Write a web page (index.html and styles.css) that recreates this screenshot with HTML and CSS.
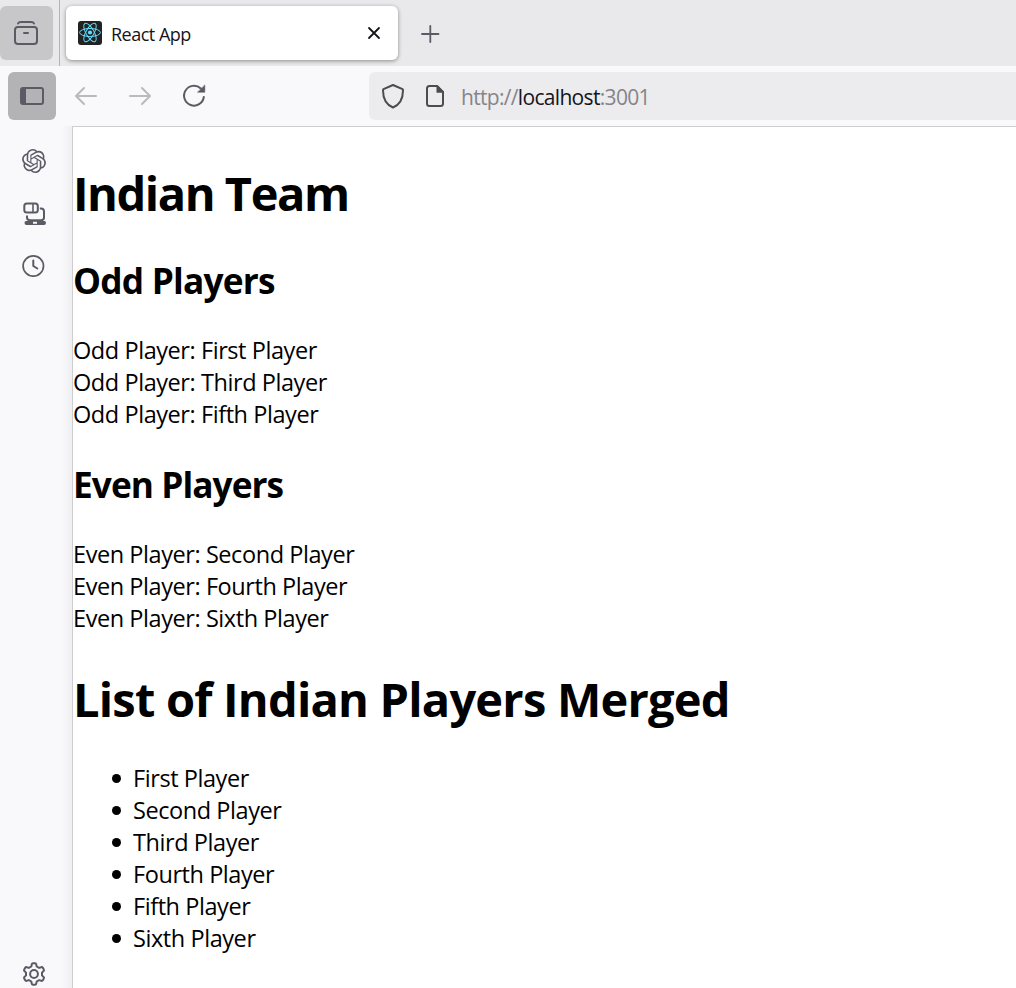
FILE: index.html
```html
<!DOCTYPE html>
<html lang="en">
<head>
<meta charset="utf-8">
<title>React App</title>
<link rel="stylesheet" href="styles.css">
</head>
<body>
<div class="browser">
  <header class="tabbar">
    <div class="firefox-view"><svg width="26" height="26" viewBox="0 0 26 26" fill="none" stroke="#5b5b66" stroke-width="2" stroke-linecap="round"><path d="M5 3.500Q5.500 2 8 2h10q2.500 0 3 1.500"/><rect x="2" y="7" width="22" height="17" rx="3"/><path d="M11 13h4"/></svg></div>
    <div class="divider"></div>
    <div class="tab">
      <svg class="favicon" width="24" height="24" viewBox="0 0 24 24" fill="none" stroke="#61dafb"><rect width="24" height="24" rx="3" fill="#222" stroke="none"/><circle cx="12" cy="11.500" r="2.100" fill="#61dafb" stroke="none"/><ellipse cx="12" cy="11.500" rx="10.400" ry="4" /><ellipse cx="12" cy="11.500" rx="10.400" ry="4" transform="rotate(60 12 11.500)"/><ellipse cx="12" cy="11.500" rx="10.400" ry="4" transform="rotate(120 12 11.500)"/></svg>
      <span class="tab-title">React App</span>
      <svg class="close" width="12" height="12" viewBox="0 0 12 12" fill="none" stroke="#15141a" stroke-width="1.800" stroke-linecap="round"><path d="M1 1l10 10M11 1L1 11"/></svg>
    </div>
    <svg class="new-tab" width="18" height="18" viewBox="0 0 18 18" fill="none" stroke="#5b5b66" stroke-width="1.800" stroke-linecap="round"><path d="M9.300 1v16M1 9h16.500"/></svg>
  </header>
  <nav class="toolbar">
    <div class="side-toggle"><svg width="24" height="18" viewBox="0 0 24 18"><rect x="1" y="1" width="22" height="16" rx="2" fill="none" stroke="#5b5b66" stroke-width="2"/><path d="M1 1h5v16H1z" fill="#5b5b66"/></svg></div>
    <svg class="back" width="22" height="18" viewBox="0 0 22 18" fill="none" stroke="#b9b9be" stroke-width="2" stroke-linecap="round" stroke-linejoin="round"><path d="M21 9H1M9 1L1 9l8 8"/></svg>
    <svg class="forward" width="22" height="18" viewBox="0 0 22 18" fill="none" stroke="#b9b9be" stroke-width="2" stroke-linecap="round" stroke-linejoin="round"><path d="M1 9h20M13 1l8 8-8 8"/></svg>
    <svg class="reload" width="24" height="24" viewBox="0 0 24 24" fill="none" stroke="#5b5b66" stroke-width="2" stroke-linecap="round"><path d="M21.800 13A9.900 9.900 0 1 1 18.800 4.500"/><path d="M22.800 1.300V8.200H15.800z" fill="#5b5b66" stroke="#5b5b66" stroke-width=".6"/></svg>
    <div class="urlbar">
      <svg width="24" height="26" viewBox="0 0 24 26" fill="none" stroke="#4c4c50" stroke-width="2" stroke-linejoin="round"><path d="M12 2L21.500 6.200Q22 6.500 22 7.200C22 15 19 21.500 12 24.500C5 21.500 2 15 2 7.200Q2 6.500 2.500 6.200Z"/></svg>
      <svg class="page-icon" width="18" height="22" viewBox="0 0 18 22"><path d="M11 1H3.500Q1 1 1 3.500v15Q1 21 3.500 21h11Q17 21 17 18.500V7z" fill="none" stroke="#4c4c50" stroke-width="2"/><path d="M10.500 1v6.700H18V7L12 .5z" fill="#4c4c50"/></svg>
      <span class="url">http://<b>localhost</b>:3001</span>
    </div>
  </nav>
  <div class="main">
    <aside class="sidebar">
      <svg width="24" height="24" viewBox="0 0 24 24" fill="#5b5b66"><path d="M22.2819 9.8211a5.9847 5.9847 0 0 0-.5157-4.9108 6.0462 6.0462 0 0 0-6.5098-2.9A6.0651 6.0651 0 0 0 4.9807 4.1818a5.9847 5.9847 0 0 0-3.9977 2.9 6.0462 6.0462 0 0 0 .7427 7.0966 5.98 5.98 0 0 0 .511 4.9107 6.051 6.051 0 0 0 6.5146 2.9001A5.9847 5.9847 0 0 0 13.2599 24a6.0557 6.0557 0 0 0 5.7718-4.2058 5.9894 5.9894 0 0 0 3.9977-2.9001 6.0557 6.0557 0 0 0-.7475-7.0729zm-9.022 12.6081a4.4755 4.4755 0 0 1-2.8764-1.0408l.1419-.0804 4.7783-2.7582a.7948.7948 0 0 0 .3927-.6813v-6.7369l2.02 1.1686a.071.071 0 0 1 .038.052v5.5826a4.504 4.504 0 0 1-4.4945 4.4944zm-9.6607-4.1254a4.4708 4.4708 0 0 1-.5346-3.0137l.142.0852 4.783 2.7582a.7712.7712 0 0 0 .7806 0l5.8428-3.3685v2.3324a.0804.0804 0 0 1-.0332.0615L9.74 19.9502a4.4992 4.4992 0 0 1-6.1408-1.6464zM2.3408 7.8956a4.485 4.485 0 0 1 2.3655-1.9728V11.6a.7664.7664 0 0 0 .3879.6765l5.8144 3.3543-2.0201 1.1685a.0757.0757 0 0 1-.071 0l-4.8303-2.7865A4.504 4.504 0 0 1 2.3408 7.872zm16.5963 3.8558L13.1038 8.364 15.1192 7.2a.0757.0757 0 0 1 .071 0l4.8303 2.7913a4.4944 4.4944 0 0 1-.6765 8.1042v-5.6772a.79.79 0 0 0-.407-.667zm2.0107-3.0231l-.142-.0852-4.7735-2.7818a.7759.7759 0 0 0-.7854 0L9.409 9.2297V6.8974a.0662.0662 0 0 1 .0284-.0615l4.8303-2.7866a4.4992 4.4992 0 0 1 6.6802 4.66zM8.3065 12.863l-2.02-1.1638a.0804.0804 0 0 1-.038-.0567V6.0742a4.4992 4.4992 0 0 1 7.3757-3.4537l-.142.0805L8.704 5.459a.7948.7948 0 0 0-.3927.6813zm1.0976-2.3654l2.602-1.4998 2.6069 1.4998v2.9994l-2.5974 1.4997-2.6067-1.4997Z"/></svg>
      <svg class="synced" width="24" height="24" viewBox="0 0 24 24" fill="none" stroke="#5b5b66" stroke-width="2"><rect x="2.300" y="1.500" width="13.500" height="9" rx="2.500"/><path d="M11 1.500v9" stroke-width="1.600"/><path d="M17.800 6.500h1.200q3 0 3 3v6q0 2.800-3 2.800H8q-3 0-3-2.800v-2"/><path d="M4 19h18.500q1.500 0 1.500 2t-2 2H4.500q-2 0-2-2t1.500-2zM11 19.800v2h4v-2z" fill="#5b5b66" fill-rule="evenodd" stroke="none"/></svg>
      <svg class="history" width="24" height="24" viewBox="0 0 24 24" fill="none" stroke="#5b5b66" stroke-width="2" stroke-linecap="round" stroke-linejoin="round"><circle cx="12.300" cy="12" r="10.200" stroke-width="1.700"/><path d="M12.300 6.500V12l4 2.500"/></svg>
      <svg class="settings" width="24" height="24" viewBox="0 0 24 24" fill="none" stroke="#5b5b66" stroke-width="2" stroke-linejoin="round"><circle cx="12" cy="12" r="3.900"/><path d="M11 1.200h2q1 0 1.200 1l.5 2.300 2.400 1.400 2.200-.7q1-.3 1.500.5l1 1.800q.5.800-.2 1.500L20 10.600v2.800l1.600 1.600q.7.700.2 1.500l-1 1.800q-.5.800-1.500.5l-2.200-.7-2.400 1.400-.5 2.300q-.2 1-1.200 1h-2q-1 0-1.200-1l-.5-2.300-2.400-1.400-2.200.7q-1 .3-1.500-.5l-1-1.800q-.5-.8.2-1.500L4 13.400v-2.800L2.400 9q-.7-.7-.2-1.500l1-1.800q.5-.8 1.500-.5l2.200.7 2.400-1.400.5-2.300q.2-1 1.200-1z"/></svg>
    </aside>
    <main class="page">
      <h1 class="title team">Indian Team</h1>
      <h2 class="sub odd">Odd Players</h2>
      <div class="lines">
        <div class="row">Odd Player: First Player</div>
        <div class="row">Odd Player: Third Player</div>
        <div class="row">Odd Player: Fifth Player</div>
      </div>
      <h2 class="sub even">Even Players</h2>
      <div class="lines">
        <div class="row">Even Player: Second Player</div>
        <div class="row">Even Player: Fourth Player</div>
        <div class="row">Even Player: Sixth Player</div>
      </div>
      <h1 class="title merged">List of Indian Players Merged</h1>
      <ul class="players">
        <li>First Player</li>
        <li>Second Player</li>
        <li>Third Player</li>
        <li>Fourth Player</li>
        <li>Fifth Player</li>
        <li>Sixth Player</li>
      </ul>
    </main>
  </div>
</div>
</body>
</html>
```
FILE: styles.css
```css
* { box-sizing: border-box; }
body { margin: 0; font-family: "Open Sans", "Noto Sans", sans-serif; background: #f9f9fb; }
svg { display: block; flex: none; overflow: visible; }
.browser { width: 1016px; height: 988px; display: flex; flex-direction: column; overflow: hidden; }
.tabbar { height: 66px; flex: none; background: #e9e9eb; display: flex; align-items: flex-start; }
.firefox-view { width: 53px; height: 54px; margin-top: 6px; background: #c7c7c9; border-radius: 6px; padding: 14px 0 0 13px; }
.divider { width: 1px; height: 66px; margin-left: 6px; background: #b3b3b8; }
.tab { width: 332px; height: 54px; margin: 6px 0 0 6px; padding: 0 18px 0 12px; background: #fff; border-radius: 6px; box-shadow: 0 1px 4px rgba(0,0,0,.4); display: flex; align-items: center; }
.tab-title { margin-left: 9px; font-size: 18px; line-height: 24px; letter-spacing: -.5px; color: #15141a; flex: 1; padding-top: 1px; }
.new-tab { margin: 25px 0 0 23px; }
.toolbar { height: 60px; flex: none; display: flex; align-items: center; padding-left: 8px; }
.side-toggle { width: 48px; height: 48px; border-radius: 6px; background: #b3b3b5; display: flex; align-items: center; justify-content: center; }
.back { margin-left: 19px; }
.forward { margin-left: 32px; }
.reload { margin-left: 31px; }
.urlbar { flex: 1; height: 48px; margin-left: 163px; background: #ececee; border-radius: 6px 0 0 6px; display: flex; align-items: center; padding-left: 12px; }
.page-icon { margin-left: 21px; }
.url { margin-left: 17px; font-size: 21px; line-height: 28px; letter-spacing: -.68px; color: #858589; padding-top: 2px; }
.url b { font-weight: 400; color: #15141a; }
.main { flex: 1; min-height: 0; display: flex; }
.sidebar { width: 72px; display: flex; flex-direction: column; padding: 23px 0 2px 22px; background: linear-gradient(90deg, #f9f9fb 62px, #efeff1); }
.synced { margin-top: 29px; }
.history { margin-top: 28px; margin-left: -1px; }
.settings { margin-top: auto; }
.page { flex: 1; background: #fff; border: solid #ceced1; border-width: 1px 0 0 1px; color: #000; font-size: 23.5px; line-height: 32px; letter-spacing: -.43px; }
.title { margin: 34px 0 31px; font-size: 47px; line-height: 64px; font-weight: 700; }
.team { letter-spacing: -1.45px; }
.sub { margin: 0 0 30px; font-size: 35.25px; line-height: 48px; font-weight: 700; }
.odd { letter-spacing: -.78px; }
.even { letter-spacing: -.95px; }
.lines { margin: 0 0 30px; }
.merged { margin: 33px 0 31px; letter-spacing: -.79px; }
.players { margin: 0; padding: 0 0 0 60px; list-style: none; }
.players li { display: flex; align-items: center; }
.players li::before { content: ""; width: 9px; height: 9px; border-radius: 50%; background: #000; margin: 1px 12px 0 -21px; }
```
